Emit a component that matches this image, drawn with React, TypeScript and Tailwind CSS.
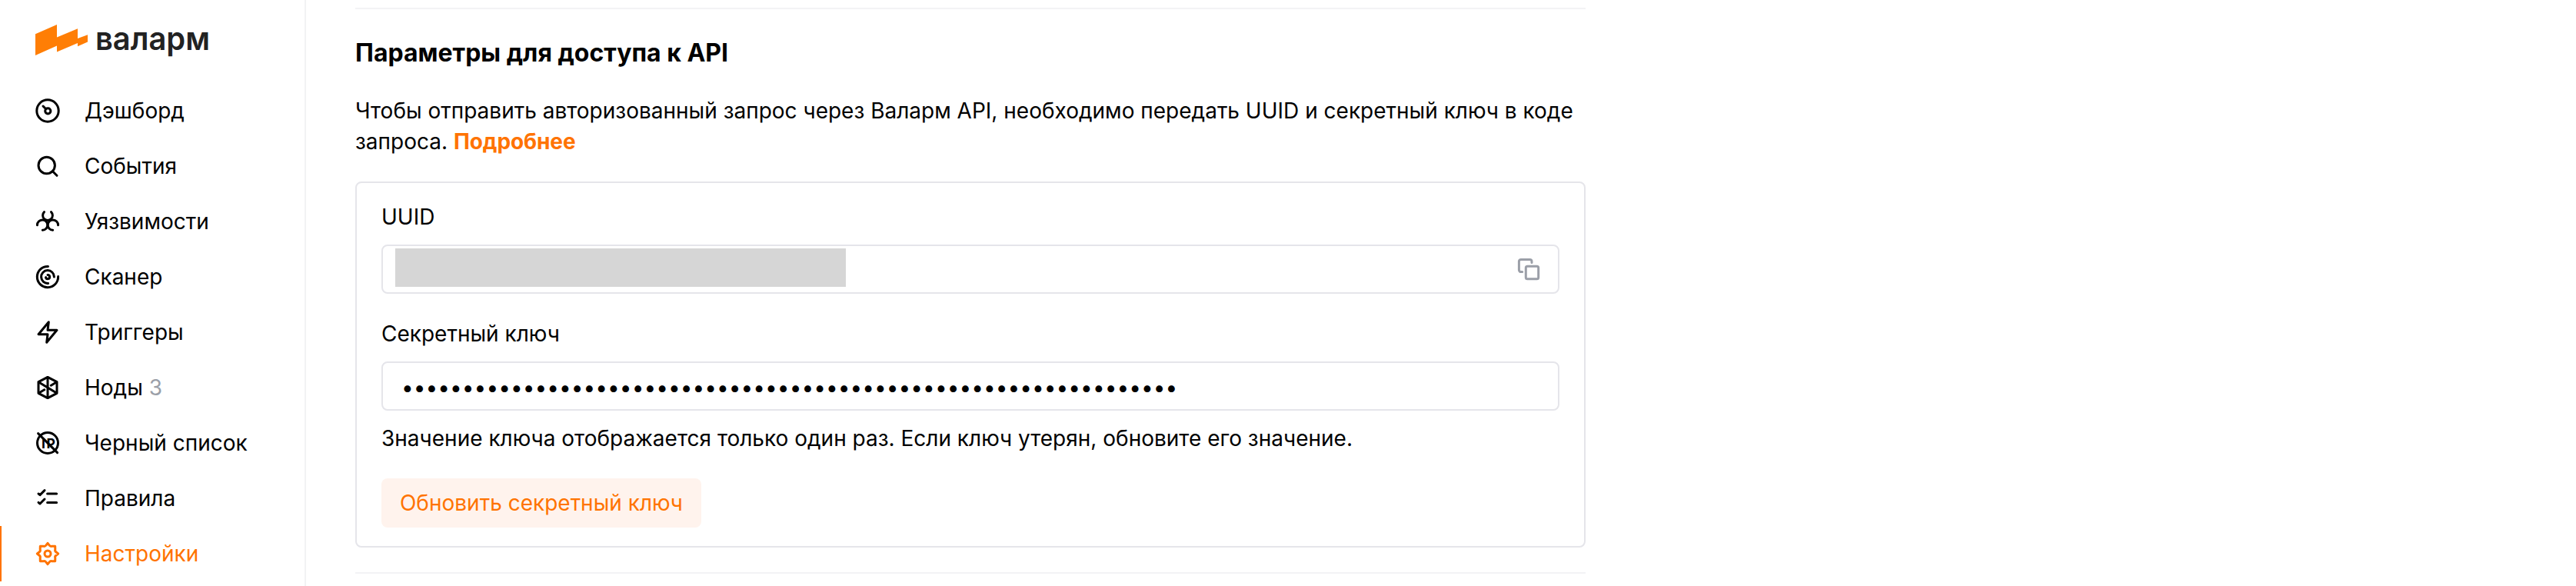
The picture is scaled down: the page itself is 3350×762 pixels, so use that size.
import React from "react";

function Icon({ children }: { children: React.ReactNode }) {
  return (
    <svg
      className="size-8 shrink-0"
      viewBox="0 0 32 32"
      fill="none"
      stroke="currentColor"
      strokeWidth="3"
      strokeLinecap="round"
      strokeLinejoin="round"
    >
      {children}
    </svg>
  );
}

const gear =
  "M16 2.3 L18.2 5.2 Q19.5 6.9 21.6 6.2 L25.7 6.3 L25.8 10.4 Q25.1 12.5 26.8 13.8 L29.7 16 L26.8 18.2 Q25.1 19.5 25.8 21.6 L25.7 25.7 L21.6 25.8 Q19.5 25.1 18.2 26.8 L16 29.7 L13.8 26.8 Q12.5 25.1 10.4 25.8 L6.3 25.7 L6.2 21.6 Q6.9 19.5 5.2 18.2 L2.3 16 L5.2 13.8 Q6.9 12.5 6.2 10.4 L6.3 6.3 L10.4 6.2 Q12.5 6.9 13.8 5.2 Z";

const items: { label: string; count?: number; active?: boolean; icon: React.ReactNode }[] = [
  {
    label: "Дэшборд",
    icon: (
      <Icon>
        <circle cx="16" cy="16" r="14.2" />
        <circle cx="16.3" cy="16.3" r="3.6" />
        <path d="M10 10L13.5 13.5" />
      </Icon>
    ),
  },
  {
    label: "События",
    icon: (
      <Icon>
        <circle cx="14.7" cy="15" r="10.7" />
        <path d="M22.5 22.8L28 28.3" />
      </Icon>
    ),
  },
  {
    label: "Уязвимости",
    icon: (
      <Icon>
        <path d="M11.5 3.6A6.4 6.4 0 1 0 20.5 3.6" />
        <path d="M2.4 20.7A6.7 6.7 0 1 1 9.3 27.3" />
        <path d="M29.6 20.7A6.7 6.7 0 1 0 22.7 27.3" />
      </Icon>
    ),
  },
  {
    label: "Сканер",
    icon: (
      <Icon>
        <path d="M16.5 2.4A13.65 13.65 0 1 0 29.6 15.6" />
        <path d="M24.4 16A8.4 8.4 0 1 0 16.6 24.4" />
        <path d="M16 13.4A2.6 2.6 0 1 1 13.5 16.6" />
      </Icon>
    ),
  },
  {
    label: "Триггеры",
    icon: (
      <Icon>
        <path d="M17.3 2.7L4 18.7H16L14.7 29.3L28 13.3H16Z" />
      </Icon>
    ),
  },
  {
    label: "Ноды",
    count: 3,
    icon: (
      <Icon>
        <path d="M16 2.4L28 8.7V23.3L16 29.6L4 23.3V8.7Z" />
        <path d="M16 2.4V29.6M4.5 9L27.5 23M26.5 9.5L20.3 13.2M5.5 22.5L11.7 18.8" />
      </Icon>
    ),
  },
  {
    label: "Черный список",
    icon: (
      <Icon>
        <circle cx="16" cy="16" r="13.5" />
        <path d="M3.6 3.6L28.6 28.6" />
        <text x="8" y="22.8" fontSize="17.5" fontWeight="700" letterSpacing="1.5" fill="currentColor" stroke="none">
          IP
        </text>
      </Icon>
    ),
  },
  {
    label: "Правила",
    icon: (
      <Icon>
        <path d="M4 10L6 11.6L12 5.6M4 21.4L6 23L12 17M15.6 10H27.6M15.6 21.4H27.6" />
      </Icon>
    ),
  },
  {
    label: "Настройки",
    active: true,
    icon: (
      <Icon>
        <path d={gear} />
        <circle cx="16" cy="16" r="4" />
      </Icon>
    ),
  },
];

function Sidebar() {
  return (
    <aside className="flex w-[398px] shrink-0 flex-col border-r-2 border-[#f2f3f4]">
      <div className="flex h-[108px] shrink-0 items-start pt-5 pl-[46px]">
        <svg className="mt-3 h-10 w-[68px] shrink-0" viewBox="0 0 68 40" fill="#ff7e05">
          <path d="M0 12.2L28 0V16.5L55 5.3V18L68 13.3V22.4L55 28.3V24L28 35.4V27.5L0 40Z" />
        </svg>
        <svg className="h-16 w-44" viewBox="0 0 176 64">
          <text x="10" y="45" fontSize="42" fontWeight="600" fill="#222" textLength="149" lengthAdjust="spacingAndGlyphs">
            валарм
          </text>
        </svg>
      </div>
      <nav className="flex flex-col">
        {items.map((item) => (
          <a
            key={item.label}
            className={
              item.active
                ? "flex h-[72px] items-center border-l-2 border-[#ff7300] pl-11 text-[#ff7300]"
                : "flex h-[72px] items-center pl-[46px]"
            }
          >
            {item.icon}
            <span className="pl-8 whitespace-nowrap">
              {item.label}
              {item.count && <span className="ml-2 text-[#9b9fa8]">{item.count}</span>}
            </span>
          </a>
        ))}
      </nav>
    </aside>
  );
}

export default function App() {
  return (
    <div className="flex h-[762px] w-[3350px] overflow-hidden bg-white font-['Inter',sans-serif] text-[28px] leading-10 text-black">
      <Sidebar />
      <main className="ml-16 flex w-[1600px] flex-col pt-[10px]">
        <hr className="border-t-2 border-[#f3f3f5]" />
        <h2 className="mt-[37px] text-[32px] leading-10 font-bold">Параметры для доступа к API</h2>
        <p className="mt-[35px]">
          Чтобы отправить авторизованный запрос через Валарм API, необходимо передать UUID и секретный ключ в коде
          запроса. <a className="font-bold tracking-[-0.1px] text-[#ff7300]">Подробнее</a>
        </p>
        <section className="mt-8 flex h-[476px] flex-col items-start rounded-lg border-2 border-[#e5e5ea] px-8 pt-6">
          <label>UUID</label>
          <div className="mt-4 flex h-16 w-full items-center justify-between rounded-lg border-2 border-[#e5e5ea] pr-[22px] pl-4">
            <div className="mb-1 h-[50px] w-[586px] bg-[#d6d6d6]" />
            <svg
              className="size-8"
              viewBox="0 0 32 32"
              fill="none"
              stroke="#9b9fa8"
              strokeWidth="3"
              strokeLinecap="round"
              strokeLinejoin="round"
            >
              <rect x="12.3" y="12.3" width="16.4" height="16.4" rx="2" />
              <path d="M7.7 19.6H6a2.6 2.6 0 0 1-2.6-2.6V6A2.6 2.6 0 0 1 6 3.4h11.4A2.6 2.6 0 0 1 20 6v1.5" />
            </svg>
          </div>
          <label className="mt-8">Секретный ключ</label>
          <div className="mt-4 flex h-16 w-full items-center rounded-lg border-2 border-[#e5e5ea] pt-1 pl-6">
            <span className="tracking-[0.02px] whitespace-nowrap">{"•".repeat(64)}</span>
          </div>
          <p className="mt-4">Значение ключа отображается только один раз. Если ключ утерян, обновите его значение.</p>
          <button className="mt-8 h-16 w-[416px] rounded-lg bg-[#fff3ed] text-[#ff7300]">Обновить секретный ключ</button>
        </section>
        <hr className="mt-8 border-t-2 border-[#f3f3f5]" />
      </main>
    </div>
  );
}
